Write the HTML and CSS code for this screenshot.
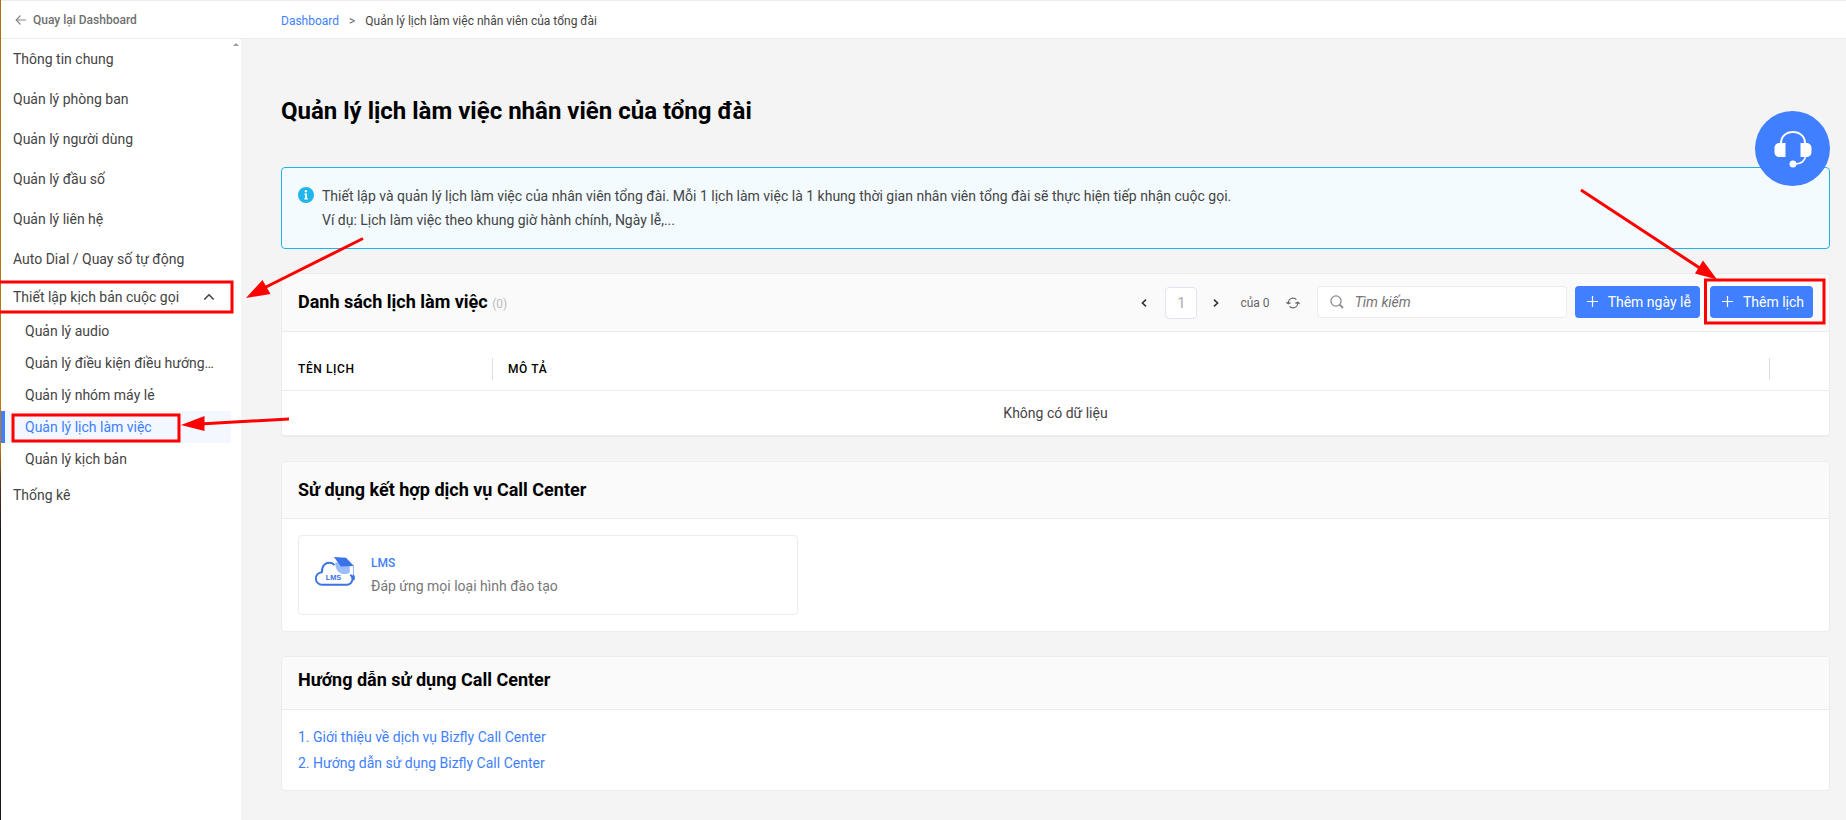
FILE: index.html
```html
<!DOCTYPE html>
<html lang="vi">
<head>
<meta charset="utf-8">
<title>Quản lý lịch làm việc nhân viên của tổng đài</title>
<link rel="stylesheet" href="styles.css">
</head>
<body>
<div class="app">
  <header class="topbar">
    <a class="back" href="#">
      <svg width="12" height="12" viewBox="0 0 12 12" fill="none" stroke="#8a8a8a" stroke-width="1.2"><path d="M11 6H1.5M5.500 1.500L1.200 6l4.300 4.500"/></svg>
      <span>Quay lại Dashboard</span>
    </a>
    <nav class="crumbs">
      <a href="#">Dashboard</a>
      <span class="sep">&gt;</span>
      <span>Quản lý lịch làm việc nhân viên của tổng đài</span>
    </nav>
  </header>

  <div class="body">
    <nav class="sidebar">
      <svg class="scroll-up" width="6" height="3" viewBox="0 0 6 3"><path d="M0 3l3-3 3 3z" fill="#9a9a9a"/></svg>
      <a class="item" href="#">Thông tin chung</a>
      <a class="item" href="#">Quản lý phòng ban</a>
      <a class="item" href="#">Quản lý người dùng</a>
      <a class="item" href="#">Quản lý đầu số</a>
      <a class="item" href="#">Quản lý liên hệ</a>
      <a class="item" href="#">Auto Dial / Quay số tự động</a>
      <button class="group" type="button">
        <span>Thiết lập kịch bản cuộc gọi</span>
        <svg width="12" height="8" viewBox="0 0 12 8" fill="none" stroke="#444" stroke-width="1.600"><path d="M1.300 6.500L6 1.800l4.700 4.700"/></svg>
      </button>
      <a class="sub" href="#">Quản lý audio</a>
      <a class="sub" href="#">Quản lý điều kiện điều hướng…</a>
      <a class="sub" href="#">Quản lý nhóm máy lẻ</a>
      <a class="sub active" href="#">Quản lý lịch làm việc</a>
      <a class="sub" href="#">Quản lý kịch bản</a>
      <a class="item" href="#">Thống kê</a>
    </nav>

    <main class="main">
      <h1>Quản lý lịch làm việc nhân viên của tổng đài</h1>

      <section class="alert">
        <svg class="info" width="16" height="16" viewBox="0 0 16 16"><circle cx="8" cy="8" r="8" fill="#1fb6eb"/><g fill="#fff"><circle cx="7.900" cy="4.300" r="1.200"/><path d="M6.300 6.600h2.700v4.700h.9v1.100H6.200v-1.100h.9V7.700h-.8z"/></g></svg>
        <p>Thiết lập và quản lý lịch làm việc của nhân viên tổng đài. Mỗi 1 lịch làm việc là 1 khung thời gian nhân viên tổng đài sẽ thực hiện tiếp nhận cuộc gọi.<br>Ví dụ: Lịch làm việc theo khung giờ hành chính, Ngày lễ,...</p>
      </section>

      <section class="card list">
        <div class="card-head">
          <h2>Danh sách lịch làm việc <small>(0)</small></h2>
          <div class="tools">
            <div class="pager">
              <button class="icon-btn" type="button" aria-label="Trang trước"><svg width="6" height="8" viewBox="0 0 6 8" fill="none" stroke="#333" stroke-width="1.600"><path d="M5 .6L1.400 4 5 7.400"/></svg></button>
              <input class="page" type="text" value="1" aria-label="Trang">
              <button class="icon-btn" type="button" aria-label="Trang sau"><svg width="6" height="8" viewBox="0 0 6 8" fill="none" stroke="#333" stroke-width="1.600"><path d="M1 .6L4.600 4 1 7.400"/></svg></button>
              <span class="total">của 0</span>
              <button class="icon-btn" type="button" aria-label="Tải lại"><svg width="14" height="12" viewBox="0 0 14 12" fill="none" stroke="#666" stroke-width="1.200"><path d="M2.200 6.500C2.200 3.400 4.400 1.200 7 1.200c1.400 0 2.600.5 3.400 1.400M11.800 5.500c0 3.100-2.200 5.300-4.800 5.300-1.400 0-2.600-.5-3.400-1.400M.4 5.200l1.800 1.600 2.300-1.200M13.600 6.800l-1.800-1.600-2.300 1.200"/></svg></button>
            </div>
            <label class="search">
              <svg width="14" height="14" viewBox="0 0 14 14" fill="none" stroke="#8c8c8c"><circle cx="6" cy="6" r="5.100" stroke-width="1.300"/><path d="M9.700 9.700l3.300 3.300" stroke-width="1.800"/></svg>
              <input type="text" placeholder="Tìm kiếm" aria-label="Tìm kiếm">
            </label>
            <div class="actions">
              <button class="btn" type="button"><svg width="11" height="11" viewBox="0 0 11 11" stroke="#fff" stroke-width="1.200"><path d="M5.500 0v11M0 5.500h11"/></svg>Thêm ngày lễ</button>
              <button class="btn" type="button"><svg width="11" height="11" viewBox="0 0 11 11" stroke="#fff" stroke-width="1.200"><path d="M5.500 0v11M0 5.500h11"/></svg>Thêm lịch</button>
            </div>
          </div>
        </div>
        <table>
          <thead>
            <tr><th class="name"><span>Tên lịch</span></th><th><span>Mô tả</span></th><th class="end"></th></tr>
          </thead>
          <tbody>
            <tr><td colspan="3">Không có dữ liệu</td></tr>
          </tbody>
        </table>
      </section>

      <section class="card">
        <div class="card-head"><h2>Sử dụng kết hợp dịch vụ Call Center</h2></div>
        <div class="services">
          <a class="service" href="#">
            <svg width="41" height="41" viewBox="0 4 39 39">
              <path d="M8 33.300h23.500a5.400 5.400 0 0 0 3-9.600M8 33.300a6 6 0 0 1-.5-12C7.400 15 11 12 15 12.300c2 .1 3.500 1 4.500 2.300" fill="none" stroke="#3a72e8" stroke-width="1.800"/>
              <path d="M20.500 11.500C19.500 16.500 22 22 28 23c2.500.3 4.500-.3 6-1.500v-6z" fill="#9dbcfb"/>
              <path d="M37.500 15.500v9" stroke="#9dbcfb" stroke-width="1"/>
              <path d="M37.500 23l1.400 2.500-.3 3.500h-2.300l-.3-3.500z" fill="#3a72e8"/>
              <path d="M19 6.800l11.500.7 7.500 7.800-12.500.5z" fill="#3a72e8"/>
              <text x="18.500" y="28.500" text-anchor="middle" class="lms">LMS</text>
            </svg>
            <span class="service-text"><strong>LMS</strong><span>Đáp ứng mọi loại hình đào tạo</span></span>
          </a>
        </div>
      </section>

      <section class="card guide">
        <div class="card-head"><h2>Hướng dẫn sử dụng Call Center</h2></div>
        <div class="links">
          <a href="#">1. Giới thiệu về dịch vụ Bizfly Call Center</a>
          <a href="#">2. Hướng dẫn sử dụng Bizfly Call Center</a>
        </div>
      </section>
    </main>
  </div>

  <button class="support" type="button" aria-label="Hỗ trợ">
    <svg width="38" height="38" viewBox="0 0 38 38"><path d="M7 13.500C7 6.500 12 2 19 2s12 4.500 12 11.500" fill="none" stroke="#fff" stroke-width="2"/><path d="M11.500 13v14H6c-3.500 0-5.500-2-5.500-5v-4c0-3 2-5 5.500-5zM26.500 13v14H32c3.500 0 5.500-2 5.500-5v-4c0-3-2-5-5.500-5z" fill="#fff"/><path d="M31.500 27c-1 3.500-4 6.500-9.500 7" fill="none" stroke="#fff" stroke-width="1.600"/><circle cx="19" cy="34" r="3.500" fill="#fff"/></svg>
  </button>

  <svg class="marks marks-left" width="370" height="450" viewBox="0 0 370 450">
    <g fill="none" stroke="#f00" stroke-width="3"><path d="M0 282h232v30H0M13 415h166v26H13zM363 238.500L264 288M289 419l-89 5"/></g>
    <path d="M246 298l16.500-18 8 14zM181 425l23.500-9v15z" fill="#f00"/>
  </svg>
  <svg class="marks marks-right" width="270" height="150" viewBox="0 0 270 150">
    <g fill="none" stroke="#f00" stroke-width="3"><path d="M5 10L126 89.500M129.500 100h118.500v43H129.500z"/></g>
    <path d="M141 99.500l-22-6 8-13z" fill="#f00"/>
  </svg>
</div>
</body>
</html>
```

FILE: styles.css
```css
* { box-sizing: border-box; }
body { margin: 0; background: #f4f4f4; font: 14px/24px Roboto, "Noto Sans", sans-serif; color: #444; }
a { color: #407fff; text-decoration: none; }
button, input { font: inherit; color: inherit; margin: 0; padding: 0; border: 0; background: none; }
h1, h2, p { margin: 0; }
svg { display: block; flex: none; }

.app { position: relative; min-height: 100vh; display: flex; flex-direction: column; overflow: hidden; }
.app::before { content: ""; position: absolute; z-index: 3; top: 0; bottom: 0; left: 0; width: 1px; background: linear-gradient(#b0700f 0, #c07a10 53%, #5a3522 57%, #1c1420 63%, #1c1420 100%); }

.topbar { display: flex; height: 39px; border-top: 1px solid #ececec; border-bottom: 1px solid #ececec; background: #fff; font-size: 12px; }
.back { display: flex; align-items: center; gap: 6px; width: 281px; padding: 0 0 0 15px; color: #707070; font-weight: 500; }
.crumbs { display: flex; align-items: center; gap: 10px; padding-top: 2px; }
.sep { color: #666; }

.body { display: flex; flex: 1; }
.sidebar { position: relative; flex: none; width: 241px; background: #fff; display: flex; flex-direction: column; }
.scroll-up { position: absolute; top: 4px; right: 2px; }
.item, .group, .sub { display: flex; align-items: center; color: #444; }
.item { height: 40px; padding-left: 13px; }
.group { height: 36px; padding: 0 26px 0 13px; justify-content: space-between; text-align: left; }
.sub { height: 32px; margin-right: 10px; padding-left: 25px; }
.sub.active { background: #f3f7ff; color: #407fff; border-left: 5px solid #407fff; padding-left: 20px; }

.main { flex: 1; min-width: 0; padding: 56px 16px 29px 40px; }
h1 { font-size: 24px; line-height: 32px; font-weight: 700; color: #000; margin-bottom: 40px; }
.alert { display: flex; gap: 8px; padding: 16px; border: 1px solid #20b4e6; border-radius: 4px; background: #f3fbff; margin-bottom: 24px; }
.info { margin-top: 3px; }

.card { border: 1px solid #ececec; border-radius: 4px; background: #fff; margin-bottom: 24px; overflow: hidden; }
.list { border-bottom-width: 2px; }
.card-head { display: flex; align-items: center; justify-content: space-between; min-height: 57px; padding: 0 16px; background: #fafafa; border-bottom: 1px solid #ececec; }
.list .card-head { min-height: 58px; }
h2 { font-size: 18px; line-height: 24px; font-weight: 700; color: #000; }
h2 small { font-size: 12px; font-weight: 400; color: #bbb; }

.tools, .pager, .actions { display: flex; align-items: center; }
.pager { margin-right: 17px; }
.icon-btn { display: flex; align-items: center; justify-content: center; min-width: 8px; height: 32px; color: #333; }
.page { width: 32px; height: 32px; margin: 0 15px 0 17px; border: 1px solid #e2e4ee; border-radius: 4px; background: #fff; color: #aaa; text-align: center; }
.total { margin: 0 16px 0 20px; font-size: 12px; color: #666; }
.search { display: flex; align-items: center; gap: 11px; width: 250px; height: 32px; margin: 0 8px 2px 0; padding: 0 12px; border: 1px solid #ececec; border-radius: 4px; background: #fff; }
.search input { flex: 1; min-width: 0; outline: 0; }
.search input::placeholder { color: #757575; font-style: italic; opacity: 1; }
.actions { gap: 10px; margin-bottom: 2px; }
.btn { display: flex; align-items: center; gap: 10px; height: 32px; padding: 0 9px 0 12px; border-radius: 4px; background: #407fff; color: #fff; }

table { width: 100%; border-collapse: collapse; table-layout: fixed; }
th { height: 58px; padding: 26px 0 10px; border-bottom: 1px solid #ececec; text-align: left; color: #000; font-size: 12px; line-height: 22px; font-weight: 500; text-transform: uppercase; letter-spacing: 0.05em; }
th span { display: block; padding-left: 15px; border-left: 1px solid #ddd; }
th.name { width: 210px; }
th.name span { padding-left: 16px; border: 0; }
th.end { width: 60px; }
th.end::before { content: ""; display: block; height: 22px; border-left: 1px solid #ddd; }
td { height: 44px; padding: 0; text-align: center; }

.services { display: flex; padding: 16px; }
.service { display: flex; align-items: center; gap: 16px; width: 500px; height: 80px; padding: 0 15px; border: 1px solid #ececec; border-radius: 4px; }
.service-text { display: flex; flex-direction: column; color: #777; }
.service-text strong { font-size: 12px; line-height: 22px; font-weight: 500; color: #407fff; }
.lms { font: 700 7px "Liberation Sans", sans-serif; fill: #3a72e8; }

.guide .card-head { min-height: 53px; padding-bottom: 5px; }
.links { display: flex; flex-direction: column; gap: 2px; padding: 15px 16px; }

.support { position: absolute; z-index: 4; top: 111px; right: 16px; display: flex; align-items: center; justify-content: center; width: 75px; height: 75px; border-radius: 50%; background: #407fff; }
.marks { position: absolute; z-index: 5; pointer-events: none; }
.marks-left { top: 0; left: 0; }
.marks-right { top: 180px; right: 0; }
```
